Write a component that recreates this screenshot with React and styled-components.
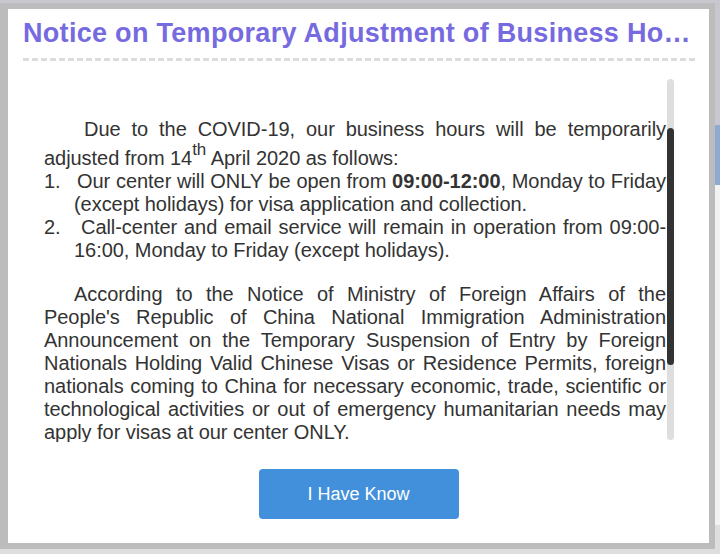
import React, { useEffect, useRef, useState } from "react"
import styled, { createGlobalStyle } from "styled-components"

const GlobalStyle = createGlobalStyle`
  html, body {
    margin: 0;
    padding: 0;
  }
  body {
    width: 720px;
    height: 554px;
    overflow: hidden;
    font-family: "Liberation Sans", Arial, sans-serif;
    background: linear-gradient(
      to bottom,
      #c8c6cf 0,
      #c8c6cf 125px,
      #8eaad0 125px,
      #8eaad0 185px,
      #f3f3f3 185px,
      #f3f3f3 525px,
      #dedede 525px
    );
  }
`

const SCROLL_TOP = 75

function App() {
  const viewportRef = useRef(null)
  const [thumb, setThumb] = useState({ top: 0, height: 0 })

  const measure = () => {
    const el = viewportRef.current
    if (!el) return
    const trackHeight = el.clientHeight - 2
    const ratio = el.clientHeight / el.scrollHeight
    const height = Math.round(trackHeight * ratio)
    const maxScroll = el.scrollHeight - el.clientHeight
    const top = maxScroll > 0 ? Math.round(((trackHeight - height) * el.scrollTop) / maxScroll) : 0
    setThumb({ top, height })
  }

  useEffect(() => {
    const el = viewportRef.current
    if (el) el.scrollTop = SCROLL_TOP
    measure()
  }, [])

  return (
    <>
      <GlobalStyle />
      <Page>
        <Dialog>
          <Header>
            <Title>Notice on Temporary Adjustment of Business Hours</Title>
          </Header>
          <ScrollArea>
            <Viewport ref={viewportRef} onScroll={measure}>
              <NoticeBody>
                <Paragraph indent={40}>
                  Due to the COVID-19, our business hours will be temporarily adjusted from 14
                  <Sup>th</Sup> April 2020 as follows:
                </Paragraph>
                <ListItem>
                  <Marker gap={33}>1.</Marker>Our center will ONLY be open from <b>09:00-12:00</b>,
                  Monday to Friday (except holidays) for visa application and collection.
                </ListItem>
                <ListItem>
                  <Marker gap={37}>2.</Marker>Call-center and email service will remain in
                  operation from 09:00-16:00, Monday to Friday (except holidays).
                </ListItem>
                <Paragraph indent={30} spaced>
                  According to the Notice of Ministry of Foreign Affairs of the People's Republic of
                  China National Immigration Administration Announcement on the Temporary Suspension
                  of Entry by Foreign Nationals Holding Valid Chinese Visas or Residence Permits,
                  foreign nationals coming to China for necessary economic, trade, scientific or
                  technological activities or out of emergency humanitarian needs may apply for
                  visas at our center ONLY.
                </Paragraph>
              </NoticeBody>
            </Viewport>
            <Track>
              <Thumb style={{ marginTop: thumb.top, height: thumb.height }} />
            </Track>
          </ScrollArea>
          <Footer>
            <ConfirmButton type="button">I Have Know</ConfirmButton>
          </Footer>
        </Dialog>
      </Page>
    </>
  )
}

const Page = styled.div`
  padding-top: 3px;
`

const Dialog = styled.div`
  box-sizing: border-box;
  width: 715px;
  height: 546px;
  background: #fff;
  border: 6px solid #bcbcbc;
  border-left-width: 8px;
  display: flex;
  flex-direction: column;
`

const Header = styled.div`
  margin: 0 14px 0 15px;
  padding: 9px 0 10px;
  border-bottom: 3px dashed #dcdcdc;
`

const Title = styled.h1`
  margin: 0;
  font-size: 27px;
  letter-spacing: 0.3px;
  font-weight: bold;
  line-height: 30px;
  color: #766ae0;
  white-space: nowrap;
  overflow: hidden;
  text-overflow: ellipsis;
`

const ScrollArea = styled.div`
  display: flex;
  height: 363px;
  margin: 18px 35px 0 36px;
`

const Viewport = styled.div`
  flex: 1;
  overflow-y: auto;
  scrollbar-width: none;
  &::-webkit-scrollbar {
    display: none;
  }
`

const NoticeBody = styled.div`
  padding: 114px 1px 112px 0;
  font-size: 20px;
  letter-spacing: -0.05px;
  line-height: 23px;
  color: #333;
  text-align: justify;
`

const Paragraph = styled.p`
  margin: ${(p) => (p.spaced ? "21px" : "0")} 0 0;
  text-indent: ${(p) => p.indent}px;
`

const Sup = styled.sup`
  font-size: 17px;
  line-height: 1;
  vertical-align: 10px;
`

const ListItem = styled.div`
  padding-left: 30px;
  text-indent: -30px;
`

const Marker = styled.span`
  display: inline-block;
  width: ${(p) => p.gap}px;
  text-indent: 0;
`

const Track = styled.div`
  width: 7px;
  height: 361px;
  border-radius: 4px;
  background: #dedede;
  display: flex;
  flex-direction: column;
`

const Thumb = styled.div`
  width: 7px;
  border-radius: 4px;
  background: #333;
`

const Footer = styled.div`
  display: flex;
  justify-content: center;
  padding: 27px 0 24px;
`

const ConfirmButton = styled.button`
  width: 200px;
  height: 50px;
  border: none;
  border-radius: 4px;
  background: #4290db;
  color: #fff;
  font-family: "Liberation Sans", Arial, sans-serif;
  font-size: 18px;
  cursor: pointer;
`

export default App
